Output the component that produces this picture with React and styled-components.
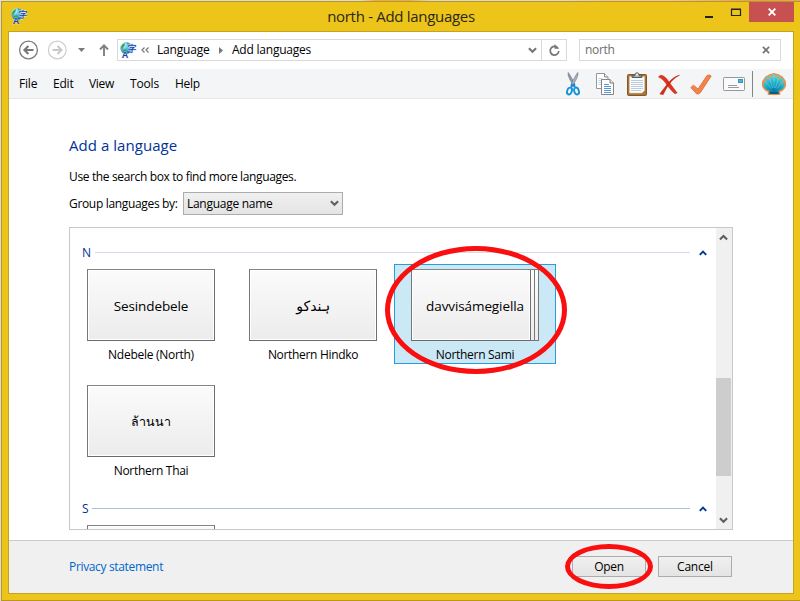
import React from 'react';
import styled, { createGlobalStyle, css } from 'styled-components';

const Global = createGlobalStyle`
  * { box-sizing: border-box; }
  body { margin: 0; background: #dfdfe3; overflow: hidden; }
`;

const Desktop = styled.div`
  width: 800px;
  height: 601px;
  padding: 1px 0 0 1px;
  background: linear-gradient(90deg, #dcdce2 0 45%, #e7a860 47% 51%, #dcd6d6 54% 71%, #efc49a 76% 84%, #e59a5a 95%, #e8a070);
  font-family: "Open Sans", "Noto Sans", sans-serif;
  font-size: 12px;
  line-height: 16px;
  color: #000;
  overflow: hidden;
`;

const Window = styled.div`
  height: 600px;
  display: flex;
  flex-direction: column;
  background: #edc51a;
  border: solid #b99a18;
  border-width: 1px 0 1px 1px;
`;

const TitleBar = styled.header`
  height: 29px;
  flex: none;
  display: grid;
  grid-template-columns: 200px 1fr 200px;
  align-items: start;
`;

const TitleIcon = styled.div`
  padding: 6px 0 0 9px;
  height: 24px;
`;

const Title = styled.h1`
  margin: 0;
  font-size: 15px;
  font-weight: 400;
  line-height: 29px;
  text-align: center;
  color: #2b2717;
  letter-spacing: ${p => p.$ls}px;
  white-space: nowrap;
`;

const Controls = styled.div`
  display: flex;
  justify-content: flex-end;
  padding-right: 6px;
`;

const Control = styled.button`
  width: ${p => (p.$close ? 45 : 27)}px;
  height: 20px;
  padding: 0;
  border: 0;
  background: ${p => (p.$close ? '#c75050' : 'transparent')};
  display: flex;
  align-items: center;
  justify-content: center;
`;

const Client = styled.div`
  flex: 1;
  margin: 0 6px 6px;
  border: 1px solid #c3a321;
  background: #fff;
  display: flex;
  flex-direction: column;
  min-height: 0;
`;

const NavRow = styled.div`
  height: 37px;
  flex: none;
  display: flex;
  padding: 7px 0 0 9px;
`;

const NavIcons = styled.div`
  width: 99px;
  height: 22px;
`;

const Field = styled.div`
  height: 22px;
  border: 1px solid #d9d9d9;
  display: flex;
  align-items: center;
`;

const Address = styled(Field)`
  width: 450px;
  padding-left: 2px;
`;

const Search = styled(Field)`
  width: 202px;
  margin-left: 12px;
  padding: 0 10px 0 5px;
  justify-content: space-between;
  color: #6d6d6d;
`;

const Crumb = styled.span`
  margin-left: ${p => p.$gap}px;
  width: ${p => p.$w}px;
  letter-spacing: ${p => p.$ls}px;
  white-space: nowrap;
`;

const AddressEnd = styled.div`
  margin-left: auto;
  display: flex;
  height: 20px;
  align-items: center;
`;

const Refresh = styled.div`
  width: 25px;
  height: 20px;
  border-left: 1px solid #d9d9d9;
  display: flex;
  align-items: center;
  justify-content: center;
  margin-left: 4px;
`;

const MenuBar = styled.nav`
  height: 30px;
  flex: none;
  background: #f4f5f7;
  border-bottom: 1px solid #e5e7ea;
  display: flex;
  padding-left: 10px;
`;

const MenuItem = styled.span`
  width: ${p => p.$w}px;
  line-height: 30px;
  letter-spacing: ${p => p.$ls}px;
`;

const Tools = styled.div`
  margin-left: auto;
  display: flex;
  width: 227px;
`;

const Main = styled.main`
  flex: 1;
  min-height: 0;
  padding: 35px 0 0 60px;
`;

const Heading = styled.h2`
  margin: 0;
  font-size: 15px;
  font-weight: 400;
  line-height: 22px;
  letter-spacing: ${p => p.$ls}px;
  color: #003399;
`;

const Hint = styled.p`
  margin: 13px 0 0;
  letter-spacing: ${p => p.$ls}px;
`;

const GroupBy = styled.div`
  display: flex;
  align-items: center;
  margin-top: 7px;
  height: 23px;
`;

const GroupLabel = styled.label`
  width: 114px;
  letter-spacing: ${p => p.$ls}px;
  white-space: nowrap;
`;

const face = css`
  background: linear-gradient(#f0f0f0, #e4e4e4);
  border: 1px solid #acacac;
`;

const Select = styled.div`
  ${face}
  width: 160px;
  height: 23px;
  display: flex;
  align-items: center;
  justify-content: space-between;
  padding: 0 3px;
  letter-spacing: ${p => p.$ls}px;
`;

const ListBox = styled.section`
  width: 664px;
  height: 303px;
  margin-top: 12px;
  border: 1px solid #c8c8c8;
  display: flex;
  overflow: hidden;
`;

const Groups = styled.div`
  width: 646px;
  padding-top: 12px;
`;

const GroupHeader = styled.div`
  height: 24px;
  display: flex;
  align-items: center;
  padding: 1px 9px 0 12px;
  color: #003399;
`;

const Letter = styled.span`
  width: ${p => p.$w}px;
`;

const Rule = styled.div`
  flex: 1;
  height: 1px;
  margin: 0 9px 0 0;
  background: ${p => p.$color};
`;

const Grid = styled.div`
  display: grid;
  grid-template-columns: repeat(3, 162px);
  grid-auto-rows: 116px;
`;

const Cell = styled.div`
  position: relative;
  height: 100px;
  border: 1px solid ${p => (p.$selected ? '#26a0da' : 'transparent')};
  background: ${p => (p.$selected ? '#cbe8f6' : 'transparent')};
  padding-top: 4px;
  display: flex;
  flex-direction: column;
  align-items: center;
`;

const Stack = styled.div`
  width: 128px;
  height: 72px;
  display: flex;
`;

const Tile = styled.div`
  flex: 1;
  border: 1px solid;
  border-color: #858585 #6f6f6f #6a6a6a #777;
  box-shadow: inset 0 0 0 1px #fff;
  background: linear-gradient(#fbfbfb, #ececec);
  display: flex;
  align-items: center;
  justify-content: center;
  padding-top: 2px;
  padding-left: ${p => p.$shift || 0}px;
  white-space: nowrap;
  font-family: ${p => (p.$arabic ? '"DejaVu Sans", sans-serif' : 'inherit')};
  font-size: ${p => p.$size || 13.5}px;
  letter-spacing: ${p => (p.$ls ? `${p.$ls}px` : 'normal')};
`;

const Sheet = styled.div`
  width: 4px;
  border: solid #777;
  border-width: 1px 1px 1px 0;
  background: linear-gradient(#fdfdfd, #ececec);
`;

const Caption = styled.div`
  margin-top: 6px;
  letter-spacing: ${p => p.$ls}px;
  white-space: nowrap;
`;

const ScrollBar = styled.div`
  width: 16px;
  background: #f0f0f0;
  display: flex;
  flex-direction: column;
  align-items: center;
  padding: 6px 1px 5px 0;
`;

const Thumb = styled.div`
  width: 15px;
  height: 98px;
  margin: 137px 0 auto;
  background: #cdcdcd;
`;

const Footer = styled.footer`
  height: 53px;
  flex: none;
  background: #f0f0f0;
  border-top: 1px solid #cccccc;
  display: flex;
  align-items: flex-start;
  padding: 15px 61px 0 60px;
`;

const Link = styled.a`
  margin: 3px auto 0 0;
  color: #0066cc;
  letter-spacing: ${p => p.$ls}px;
`;

const Button = styled.button`
  ${face}
  position: relative;
  width: 74px;
  height: 21px;
  margin-left: ${p => p.$gap || 0}px;
  padding: 0;
  font: inherit;
  line-height: 19px;
  letter-spacing: ${p => p.$ls}px;
  color: #000;
`;

const Ring = styled.span`
  position: absolute;
  left: ${p => p.$x}px;
  top: ${p => p.$y}px;
  width: ${p => p.$w}px;
  height: ${p => p.$h}px;
  border: 5px solid #f90f0f;
  border-radius: 50%;
  pointer-events: none;
`;

const Svg = styled.svg`
  display: block;
  flex: none;
  overflow: visible;
  margin-left: ${p => p.$ml || 0}px;
`;

const LanguageIcon = () => (
  <Svg width="17" height="17" viewBox="0 0 17 17">
    <defs>
      <radialGradient id="globe" cx="30%" cy="25%" r="80%">
        <stop offset="0" stopColor="#e9fbff" />
        <stop offset=".4" stopColor="#67c7ee" />
        <stop offset="1" stopColor="#1464ae" />
      </radialGradient>
    </defs>
    <circle cx="6.2" cy="6" r="6" fill="url(#globe)" />
    <path d="M1 5 2.500 2.300 5 1 4.500 4 3 5.500 2.500 8zM7 .6l3 1.400L11 4 9 4.200 8 3zM3 8l3-1 1 2-2 1.500-2-1z" fill="#37a849" />
    <text x="7.600" y="10.400" fontFamily="Noto Sans CJK SC, sans-serif" fontWeight="500" fontSize="9" fill="#153fa9" stroke="#d8ecfb" strokeWidth=".8" paintOrder="stroke">字</text>
    <text x="1.800" y="15.500" fontFamily="Liberation Sans, sans-serif" fontWeight="700" fontSize="9" fill="#153fa9" stroke="#d8ecfb" strokeWidth=".6" paintOrder="stroke">A</text>
  </Svg>
);

const NavArrows = () => (
  <Svg width="99" height="22" viewBox="0 0 99 22" fill="none">
    <circle cx="10.5" cy="11" r="8.9" stroke="#7b7b7b" strokeWidth="1.3" />
    <path d="M15.5 11H7M10.4 7 6.4 11l4 4" stroke="#777" strokeWidth="2.1" />
    <circle cx="39.3" cy="11" r="8.9" stroke="#cecece" strokeWidth="1.2" />
    <path d="M34.5 11H43M39.5 7l4 4-4 4" stroke="#c8c8c8" strokeWidth="2" />
    <path d="M60 9h7l-3.5 4z" fill="#7b7b7b" />
    <path d="M86 17V7M82 10.5 86 6.3l4 4.2" stroke="#808080" strokeWidth="1.9" />
  </Svg>
);

const Chevron = ({ up, color = '#606060', w = 9 }) => (
  <Svg width={w} height={w * 0.75} viewBox="0 0 8 6" fill="none">
    <path d={up ? 'M.8 4.9 4 1.7l3.2 3.2' : 'M.8 1.1 4 4.3l3.2-3.2'} stroke={color} strokeWidth="1.9" />
  </Svg>
);

const Scissors = () => (
  <Svg width="14" height="24" viewBox="0 0 14 24" fill="none">
    <path d="M2.2.5C1.6 3 3 7 7.8 14.2L9 12.5C6.8 8 4.5 3.5 2.2.5z" fill="#8d98a8" stroke="#6d7888" strokeWidth=".6" />
    <path d="M11.8.5c.6 2.5-.8 6.500-5.600 13.700L5 12.500C7.200 8 9.500 3.500 11.800.500z" fill="#aab3bf" stroke="#66717f" strokeWidth=".6" />
    <path d="M6.600 12 5.200 15M7.400 12l1.400 3" stroke="#1488d4" strokeWidth="2.200" />
    <ellipse cx="3.500" cy="19" rx="2.300" ry="3.500" transform="rotate(20 3.500 19)" stroke="#1693dd" strokeWidth="1.900" />
    <ellipse cx="10.500" cy="19" rx="2.300" ry="3.500" transform="rotate(-20 10.500 19)" stroke="#1693dd" strokeWidth="1.900" />
  </Svg>
);

const Copy = () => (
  <Svg width="18" height="22" viewBox="0 0 18 22" fill="#fff" $ml={16}>
    <path d="M.5.500h8l3.500 3.500v11.500H.500z" stroke="#969696" />
    <path d="M8.500.500V4H12" stroke="#8a8a8a" fill="#eee" />
    <path d="M2.500 5.500h4M2.500 7.500h6M2.500 9.500h6M2.500 11.500h6" stroke="#bdd4e8" />
    <path d="M5.500 6.500h8.500l3.500 3.500v11.500h-12z" stroke="#858585" />
    <path d="M14 6.500V10h3.500" stroke="#777" fill="#eee" />
    <path d="M8 11.500h5M8 13.500h7M8 15.500h7M8 17.500h7M8 19.500h7" stroke="#5796d4" />
  </Svg>
);

const Clipboard = () => (
  <Svg width="20" height="24" viewBox="0 0 20 24" $ml={13}>
    <rect x=".5" y="2.500" width="19" height="21" rx="1" fill="#a8743c" stroke="#875621" />
    <path d="M2.500 4.500h15v14l-2.500 2.500H2.500z" fill="#fbfcfd" stroke="#d9cdbd" strokeWidth=".6" />
    <path d="M4 8.500h12M4 10.500h12M4 12.500h12M4 14.500h12M4 16.500h12M4 18.500h10" stroke="#bccbd9" />
    <path d="M5 5.500V3.800h2.500Q8 .7 10 .7t2.500 3.100H15v1.700z" fill="#aeb4b8" stroke="#4a4d50" strokeWidth=".9" />
    <circle cx="10" cy="2.500" r=".9" fill="#fff" />
  </Svg>
);

const Delete = () => (
  <Svg width="22" height="21" viewBox="0 0 22 21" $ml={11}>
    <path d="M.6 3.200C1.500 1 3.500.8 5.500 2c3 2 4.600 4.600 6 6.600 2.600 3.600 5 6.900 7.700 10.300l-2.300.9c-3.600-3-6.100-6.200-8.600-9.800C5.900 6.500 3.900 4.500.6 3.200z" fill="#dd3420" stroke="#c5301d" strokeWidth=".5" />
    <path d="M21.500 1.200C16 2.500 12.500 6 9 10.500 6.500 13.800 4 17 1.800 20l3.400.6c1.800-3.700 3.300-6.900 5.800-10.200 2.900-3.900 6-7 10.500-9.200z" fill="#d52a19" stroke="#b92214" strokeWidth=".5" />
  </Svg>
);

const Check = () => (
  <Svg width="22" height="21" viewBox="0 0 22 21" $ml={10}>
    <path d="M.8 13.500 3.500 11.200 8 15 17 1.500Q19.500.2 21.200 2L10.500 18.500Q8.500 20.800 6.500 19.800z" fill="#f5824c" stroke="#dc6a37" strokeWidth=".8" />
  </Svg>
);

const Mail = () => (
  <Svg width="22" height="14" viewBox="0 0 22 14" $ml={11}>
    <rect x=".5" y=".5" width="21" height="13" rx=".8" fill="#fafafa" stroke="#999" />
    <rect x="15.500" y="2.500" width="4" height="3" fill="#4ab8de" stroke="#3795bd" />
    <path d="M5 8.500h9M5 10.500h11" stroke="#999" />
  </Svg>
);

const Shell = () => (
  <Svg width="24" height="22" viewBox="0 0 24 22" $ml={9}>
    <defs>
      <radialGradient id="shell" cx="50%" cy="85%" r="85%">
        <stop offset="0" stopColor="#0875a0" />
        <stop offset=".45" stopColor="#1aa8c6" />
        <stop offset="1" stopColor="#62e2e8" />
      </radialGradient>
    </defs>
    <path d="M6.500 21.300v-3Q3 17.500 1.800 15 .2 13 .8 10.500.5 8 2.500 6 3.500 3.500 6 3q2-2 4-1.500Q12 0 14 1.500q2-.5 4 1.500 2.500.5 3.500 3 2 2 1.700 4.500.6 2.500-1 4.500-1.200 2.500-4.700 3.300v3z" fill="url(#shell)" stroke="#ec8e46" strokeWidth="1.500" />
    <path d="M12 15V3M10.500 15 7.500 5M13.500 15l3-10M9 15.500 4 9M15 15.500 20 9" stroke="#8ceff2" strokeWidth=".7" strokeOpacity=".6" />
    <path d="M7.500 20h9" stroke="#075d83" strokeWidth="2" />
    <path d="M9.800 1.500v3.800M14.200 1.500v3.800M5.600 3.500 7.300 7M18.400 3.500 16.700 7M2 8l2.800 2M22 8l-2.800 2" stroke="#ee9550" strokeWidth="1.100" />
  </Svg>
);

const ToolCell = styled.div`
  height: 30px;
  display: flex;
  align-items: center;
`;

const Divider = styled.div`
  width: 1px;
  height: 26px;
  margin: 2px 0 0 7px;
  background: #858585;
`;

const Group = ({ letter, width, rule, children }) => (
  <>
    <GroupHeader>
      <Letter $w={width}>{letter}</Letter>
      <Rule $color={rule} />
      <Chevron up color="#003399" w={8} />
    </GroupHeader>
    <Grid>{children}</Grid>
  </>
);

export default function App() {
  return (
    <Desktop>
      <Global />
      <Window>
        <TitleBar>
          <TitleIcon><LanguageIcon /></TitleIcon>
          <Title $ls={-0.3}>north - Add languages</Title>
          <Controls>
            <Control aria-label="Minimize">
              <Svg width="8" height="14"><path d="M0 11h8v2H0z" fill="#222" /></Svg>
            </Control>
            <Control aria-label="Maximize">
              <Svg width="10" height="8"><path d="M.5 1.500h9v6h-9zM0 1h10" fill="none" stroke="#222" strokeWidth="1.200" /></Svg>
            </Control>
            <Control $close aria-label="Close">
              <Svg width="8" height="8" viewBox="0 0 8 8"><path d="M.7.700l6.600 6.600M7.300.700.7 7.300" stroke="#fff" strokeWidth="1.900" /></Svg>
            </Control>
          </Controls>
        </TitleBar>
        <Client>
          <NavRow>
            <NavIcons><NavArrows /></NavIcons>
            <Address>
              <LanguageIcon />
              <Svg width="8" height="6" viewBox="0 0 8 6" $ml={4}><path d="M3.500.500 1 3l2.500 2.500M7.500.500 5 3l2.500 2.500" fill="none" stroke="#777" strokeWidth="1.200" /></Svg>
              <Crumb $gap={8} $w={62} $ls={-0.2}>Language</Crumb>
              <Svg width="4" height="7" viewBox="0 0 4 7"><path d="M0 0l4 3.500L0 7z" fill="#777" /></Svg>
              <Crumb $gap={9} $w={90} $ls={-0.22}>Add languages</Crumb>
              <AddressEnd>
                <Chevron color="#777" />
                <Refresh>
                  <Svg width="11" height="12" viewBox="0 0 11 12"><path d="M8.800 4A4.300 4.300 0 1 0 9.800 7" fill="none" stroke="#777" strokeWidth="1.700" /><path d="M5.500 4.800V0l4.800 4.800z" fill="#777" /></Svg>
                </Refresh>
              </AddressEnd>
            </Address>
            <Search>
              <Crumb $gap={0} $ls={-0.3}>north</Crumb>
              <Svg width="8" height="8" viewBox="0 0 9 9"><path d="M1 1l7 7M8 1 1 8" stroke="#747474" strokeWidth="1.900" /></Svg>
            </Search>
          </NavRow>
          <MenuBar>
            <MenuItem $w={34} $ls={-0.2}>File</MenuItem>
            <MenuItem $w={36} $ls={-0.2}>Edit</MenuItem>
            <MenuItem $w={41} $ls={-0.3}>View</MenuItem>
            <MenuItem $w={45} $ls={-0.15}>Tools</MenuItem>
            <MenuItem $w={40} $ls={-0.25}>Help</MenuItem>
            <Tools>
              <ToolCell><Scissors /></ToolCell>
              <ToolCell><Copy /></ToolCell>
              <ToolCell><Clipboard /></ToolCell>
              <ToolCell><Delete /></ToolCell>
              <ToolCell><Check /></ToolCell>
              <ToolCell><Mail /></ToolCell>
              <Divider />
              <ToolCell><Shell /></ToolCell>
            </Tools>
          </MenuBar>
          <Main>
            <Heading $ls={0.05}>Add a language</Heading>
            <Hint $ls={-0.36}>Use the search box to find more languages.</Hint>
            <GroupBy>
              <GroupLabel $ls={-0.33}>Group languages by:</GroupLabel>
              <Select $ls={-0.28}>Language name<Chevron /></Select>
            </GroupBy>
            <ListBox>
              <Groups>
                <Group letter="N" width={13} rule="#d5dce8">
                  <Cell>
                    <Stack><Tile $ls={-0.1}>Sesindebele</Tile></Stack>
                    <Caption $ls={-0.28}>Ndebele (North)</Caption>
                  </Cell>
                  <Cell>
                    <Stack><Tile dir="rtl" lang="hno" $arabic $size={14}>ہندکو</Tile></Stack>
                    <Caption $ls={-0.32}>Northern Hindko</Caption>
                  </Cell>
                  <Cell $selected>
                    <Stack><Tile $shift={8} $ls={-0.1}>davvisámegiella</Tile><Sheet /><Sheet /></Stack>
                    <Caption $ls={-0.3}>Northern Sami</Caption>
                    <Ring $x={-10} $y={-19} $w={182} $h={128} />
                  </Cell>
                  <Cell>
                    <Stack><Tile lang="th" $size={12.5}>ล้านนา</Tile></Stack>
                    <Caption $ls={-0.3}>Northern Thai</Caption>
                  </Cell>
                </Group>
                <Group letter="S" width={10} rule="#b0bddd">
                  <Cell><Stack><Tile /></Stack></Cell>
                </Group>
              </Groups>
              <ScrollBar>
                <Chevron up />
                <Thumb />
                <Chevron />
              </ScrollBar>
            </ListBox>
          </Main>
          <Footer>
            <Link $ls={-0.34}>Privacy statement</Link>
            <Button $ls={-0.3}>Open<Ring $x={-8} $y={-13} $w={88} $h={45} /></Button>
            <Button $gap={12} $ls={-0.2}>Cancel</Button>
          </Footer>
        </Client>
      </Window>
    </Desktop>
  );
}
